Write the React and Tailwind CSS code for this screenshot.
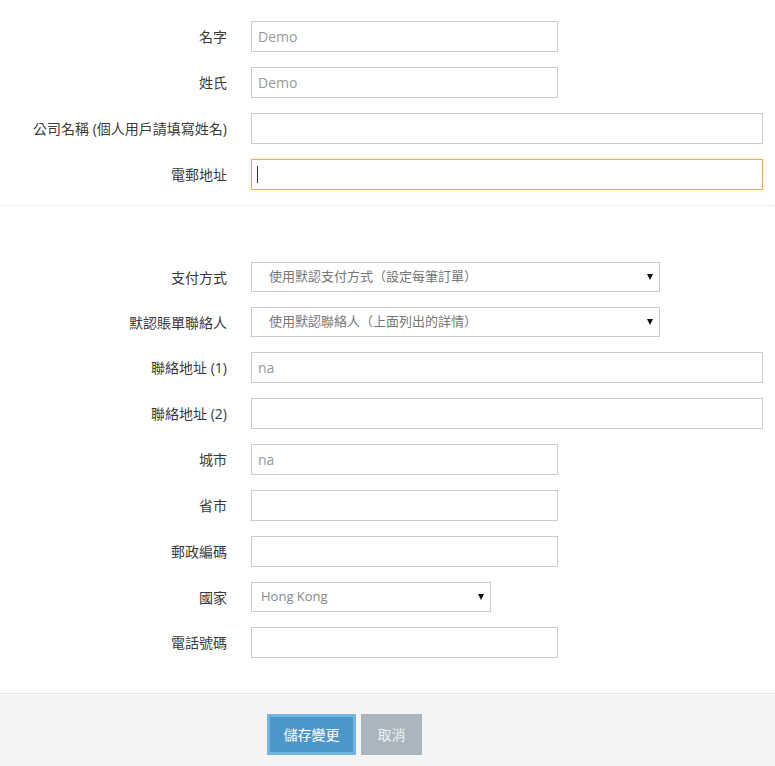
import React from 'react';

const font = { fontFamily: '"Open Sans", "Noto Sans CJK TC", sans-serif' };

const Row = ({ label, children }) => (
  <div className="grid grid-cols-[227px_1fr] gap-x-6 items-center">
    <label className="text-right text-[14px] text-[#3a3a3a]">{label}</label>
    <div>{children}</div>
  </div>
);

const TextInput = ({ value = '', width }) => (
  <input
    type="text"
    defaultValue={value}
    className={`${width} h-[31px] border border-[#ccc] bg-white px-[6px] text-[14px] text-[#999] outline-none`}
  />
);

const Select = ({ value, width, pad }) => (
  <div className={`relative ${width}`}>
    <select
      defaultValue={value}
      className={`w-full h-[30px] appearance-none border border-[#ccc] bg-white ${pad} text-[13px] text-[#777] outline-none`}
    >
      <option value={value}>{value}</option>
    </select>
    <svg className="pointer-events-none absolute right-[7px] top-[12px]" width="6" height="6" viewBox="0 0 6 6">
      <path d="M0 0 H6 L3 6 Z" fill="#111" />
    </svg>
  </div>
);

const App = () => {
  return (
    <div className="w-[775px] min-h-[766px] bg-white" style={font}>
      <div className="flex flex-col gap-[15px] pt-[21px]">
        <Row label="名字"><TextInput value="Demo" width="w-[307px]" /></Row>
        <Row label="姓氏"><TextInput value="Demo" width="w-[307px]" /></Row>
        <Row label="公司名稱 (個人用戶請填寫姓名)"><TextInput width="w-[512px]" /></Row>
        <Row label="電郵地址">
          <div className="relative w-[512px]">
            <input
              type="email"
              className="w-full h-[31px] border border-[#e6ad67] bg-white px-[6px] text-[14px] outline-none shadow-[0_0_3px_1px_#fdf0c8]"
            />
            <span className="absolute left-[6px] top-[7px] h-[17px] w-px bg-[#333]" />
          </div>
        </Row>
      </div>

      <div className="mt-[15px] border-t border-dotted border-[#e2e2e2]" />

      <div className="flex flex-col gap-[15px] pt-[56px]">
        <Row label="支付方式">
          <Select value="使用默認支付方式（設定每筆訂單）" width="w-[409px]" pad="pl-[17px]" />
        </Row>
        <Row label="默認賬單聯絡人">
          <Select value="使用默認聯絡人（上面列出的詳情）" width="w-[409px]" pad="pl-[17px]" />
        </Row>
        <Row label="聯絡地址 (1)"><TextInput value="na" width="w-[512px]" /></Row>
        <Row label="聯絡地址 (2)"><TextInput width="w-[512px]" /></Row>
        <Row label="城市"><TextInput value="na" width="w-[307px]" /></Row>
        <Row label="省市"><TextInput width="w-[307px]" /></Row>
        <Row label="郵政編碼"><TextInput width="w-[307px]" /></Row>
        <Row label="國家">
          <Select value="Hong Kong" width="w-[240px]" pad="pl-[9px] text-[#888]" />
        </Row>
        <Row label="電話號碼"><TextInput width="w-[307px]" /></Row>
      </div>

      <div className="mt-[35px] border-t border-[#e5e5e5] bg-[#f4f4f4] pt-[20px] pb-[12px]">
        <div className="flex gap-[5px] pl-[267px]">
          <button
            type="button"
            className="h-[41px] w-[89px] border-[3px] border-[#72b4e2] bg-[#4b97c9] text-[14px] text-white"
          >
            儲存變更
          </button>
          <button
            type="button"
            className="h-[41px] w-[61px] bg-[#a9b6bf] text-[14px] text-[#eef1f3]"
          >
            取消
          </button>
        </div>
      </div>
    </div>
  );
};

export default App;
